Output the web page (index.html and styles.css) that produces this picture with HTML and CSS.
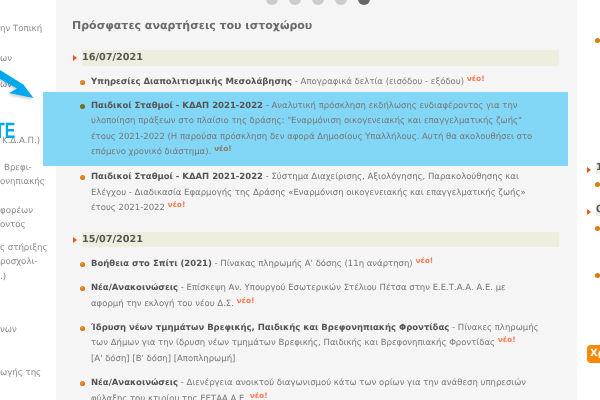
FILE: index.html
```html
<!DOCTYPE html>
<html lang="el">
<head>
<meta charset="utf-8">
<title>Πρόσφατες αναρτήσεις</title>
<link rel="stylesheet" href="styles.css">
</head>
<body>
<div class="page">
  <nav class="side">
    <p class="s s1">ην Τοπική</p>
    <p class="s s2">ων</p>
    <p class="s s3">ων</p>
    <p class="s s4">Κ.Δ.Α.Π.)</p>
    <p class="s s5"><span class="in">Βρεφι-</span><br>ονηπιακής</p>
    <p class="s s6">φορέων<br>οντος</p>
    <p class="s s7">ς στήριξης<br>ροσχολι-<br>.)</p>
    <p class="s s8">νων</p>
    <p class="s s9">ωγής της</p>
  </nav>
  <main class="main">
    <div class="dots"><i></i><i></i><i></i><i></i><i class="on"></i></div>
    <h2 class="title">Πρόσφατες αναρτήσεις του ιστοχώρου</h2>
    <h3 class="date">16/07/2021</h3>
    <ul class="list first">
      <li class="item"><b>Υπηρεσίες Διαπολιτισμικής Μεσολάβησης</b> - Απογραφικά δελτία (εισόδου - εξόδου) <sup class="new">νέο!</sup></li>
      <li class="item hl"><b>Παιδικοί Σταθμοί - ΚΔΑΠ 2021-2022</b> - Αναλυτική πρόσκληση εκδήλωσης ενδιαφέροντος για την<br>υλοποίηση πράξεων στο πλαίσιο της δράσης: "Εναρμόνιση οικογενειακής και επαγγελματικής ζωής"<br>έτους 2021-2022 (Η παρούσα πρόσκληση δεν αφορά Δημοσίους Υπαλλήλους. Αυτή θα ακολουθήσει στο<br>επόμενο χρονικό διάστημα). <sup class="new">νέο!</sup></li>
      <li class="item"><b>Παιδικοί Σταθμοί - ΚΔΑΠ 2021-2022</b> - Σύστημα Διαχείρισης, Αξιολόγησης, Παρακολούθησης και<br>Ελέγχου - Διαδικασία Εφαρμογής της Δράσης «Εναρμόνιση οικογενειακής και επαγγελματικής ζωής»<br>έτους 2021-2022 <sup class="new">νέο!</sup></li>
    </ul>
    <h3 class="date">15/07/2021</h3>
    <ul class="list">
      <li class="item"><b>Βοήθεια στο Σπίτι (2021)</b> - Πίνακας πληρωμής Α' δόσης (11η ανάρτηση) <sup class="new">νέο!</sup></li>
      <li class="item"><b>Νέα/Ανακοινώσεις</b> - Επίσκεψη Αν. Υπουργού Εσωτερικών Στέλιου Πέτσα στην Ε.Ε.Τ.Α.Α. Α.Ε. με<br>αφορμή την εκλογή του νέου Δ.Σ. <sup class="new">νέο!</sup></li>
      <li class="item"><b>Ίδρυση νέων τμημάτων Βρεφικής, Παιδικής και Βρεφονηπιακής Φροντίδας</b> - Πίνακες πληρωμής<br>των Δήμων για την ίδρυση νέων τμημάτων Βρεφικής, Παιδικής και Βρεφονηπιακής Φροντίδας <sup class="new">νέο!</sup><br>[Α' δόση] [Β' δόση] [Αποπληρωμή]</li>
      <li class="item"><b>Νέα/Ανακοινώσεις</b> - Διενέργεια ανοικτού διαγωνισμού κάτω των ορίων για την ανάθεση υπηρεσιών<br>φύλαξης του κτιρίου της ΕΕΤΑΑ Α.Ε. <sup class="new">νέο!</sup></li>
    </ul>
  </main>
  <aside class="aside">
    <span class="dot d1"></span>
    <h3 class="date d2">1</h3>
    <span class="dot d3"></span>
    <h3 class="date d4">0</h3>
    <span class="dot d5"></span>
    <span class="dot d6"></span>
    <span class="btn">Χρ</span>
  </aside>
  <svg class="arrow" width="36" height="34" viewBox="0 69 36 34" aria-hidden="true"><path d="M0 70 L24 85 L20 80 L33.5 98 L9 93 L17 88.5 L0 79 Z" fill="#00a8ec"/></svg>
  <span class="te">TE</span>
</div>
</body>
</html>
```
FILE: styles.css
```css
* { box-sizing: border-box; }
html, body { margin: 0; padding: 0; }
body { width: 600px; height: 400px; overflow: hidden; background: #fff; font-family: "DejaVu Sans", Verdana, sans-serif; font-size: 9px; color: #777; text-rendering: geometricPrecision; }
.page { position: relative; display: flex; width: 600px; height: 400px; overflow: hidden; filter: blur(.3px); }
.side { width: 56px; flex: none; overflow: hidden; font-size: 8.6px; line-height: 14.5px; color: #888; }
.s { margin: 0; white-space: nowrap; }
.s1 { margin-top: 21.75px; }
.s2 { margin-top: 15.5px; }
.s3 { margin-top: 11.5px; }
.s4 { margin-top: 41.5px; padding-left: 2px; }
.s5 { margin-top: 12.5px; }
.in { margin-left: 4px; }
.s6 { margin-top: 14px; }
.s7 { margin-top: 8px; }
.s8 { margin-top: 38.5px; }
.s9 { margin-top: 28.5px; }
.main { width: 521px; flex: none; background: #f5f5f5; padding: 0 18px 0 16px; }
.dots { display: flex; gap: 11px; margin: -7.5px 0 0 194px; height: 12px; }
.dots i { width: 12px; height: 12px; border-radius: 50%; background: #ccc; }
.dots i.on { background: #666; }
.title { margin: 13.5px 0 16px; font-size: 11px; line-height: 16px; font-weight: bold; color: #6b6b6b; }
.date { position: relative; margin: 0 0 0 10px; height: 15.5px; background: #eeeede; font-size: 9.7px; line-height: 15.5px; font-weight: bold; color: #555; }
.date::before { content: ""; position: absolute; left: -9px; top: 5px; border-left: 4px solid #e8541a; border-top: 3px solid transparent; border-bottom: 3px solid transparent; }
.list { list-style: none; margin: 0 0 0 19px; padding: 1px 0 0; }
.first { padding: 1px 0 15.2px; }
.item { position: relative; margin-top: 8.5px; font-size: 8.5px; line-height: 15.6px; color: #777; white-space: nowrap; }
.item b { color: #555; font-size: 8.5px; }
.item::before { content: ""; position: absolute; left: -11px; top: 5px; width: 5px; height: 5px; border-radius: 50%; background: radial-gradient(circle at 40% 35%, #f09a2a, #b85a00); }
.hl { background: #82d7f7; margin: 1.4px -9px 0 -48px; padding: 6.6px 0 5px 48px; }
.hl::before { left: 37px; top: 11.6px; background: #7a6a20; }
.hl + .item { margin-top: 4px; }
.new { font-size: 7.5px; font-weight: bold; color: #fa7a50; line-height: 0; vertical-align: 3px; }
.hl .new { color: #8a7a6a; }
.aside { width: 23px; flex: none; position: relative; }
.dot { position: absolute; left: 18px; width: 5px; height: 5px; border-radius: 50%; background: #d97a10; }
.d1 { top: 38px; }
.d3 { top: 181.5px; }
.d5 { top: 226px; }
.d6 { top: 272.5px; }
.aside .date { position: absolute; left: 19px; width: 20px; margin: 0; height: 12px; line-height: 12px; overflow: visible; }
.d2 { top: 161.5px; }
.d4 { top: 204px; }
.btn { position: absolute; left: 10px; top: 345px; width: 40px; height: 18px; background: #f78a00; color: #fff; font-weight: bold; font-size: 10px; line-height: 18px; border-radius: 4px 0 0 4px; padding-left: 3px; }
.arrow { position: absolute; left: 0; top: 69px; filter: drop-shadow(-1px 2px 1px rgba(0,0,0,.18)); }
.te { position: absolute; left: -5px; top: 120px; font-family: "Liberation Sans", sans-serif; font-weight: bold; font-size: 22px; line-height: 22px; color: #00a8ec; transform: scaleX(.72); transform-origin: left top; }
```
